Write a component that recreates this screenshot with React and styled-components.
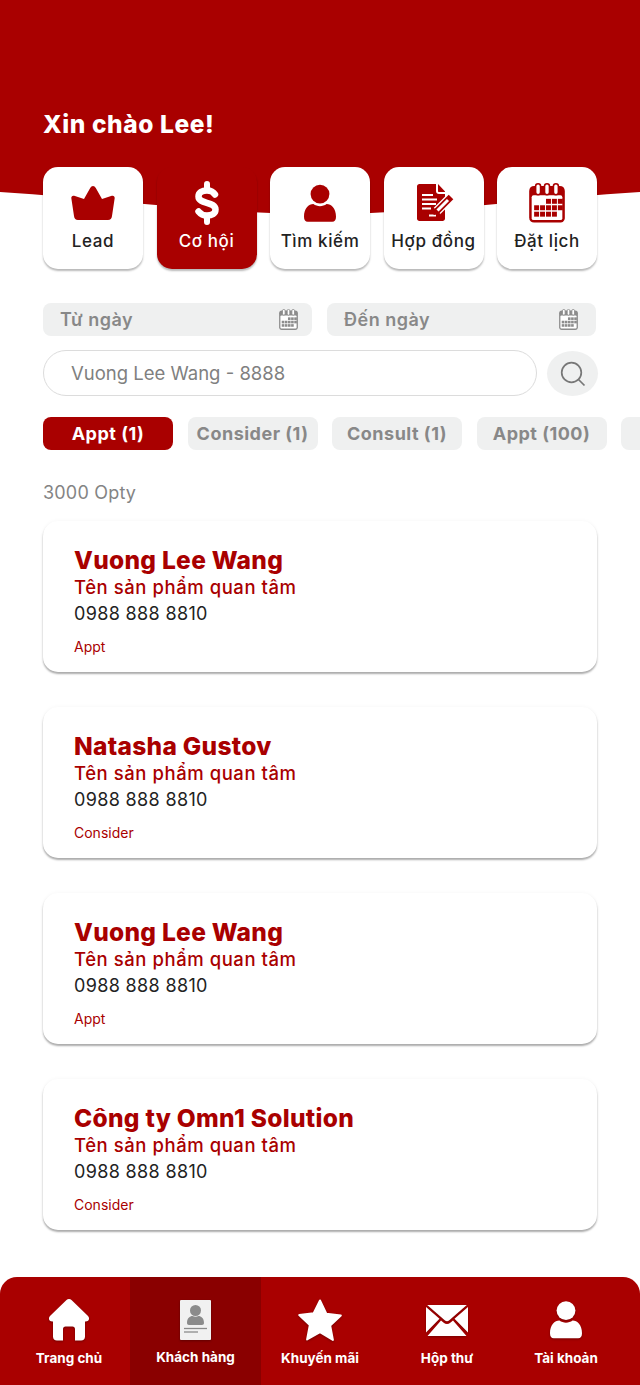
import React from "react";
import styled, { createGlobalStyle } from "styled-components";

const RED = "#a90000";
const FONT = `Inter, "Noto Sans", sans-serif`;

const Global = createGlobalStyle`
  html, body { margin: 0; padding: 0; background: #fff; }
  body { font-family: ${FONT}; }
  * { box-sizing: border-box; }
`;

const Page = styled.div`
  position: relative;
  width: 640px;
  height: 1385px;
  overflow: hidden;
  background: #fff;
  display: flex;
  flex-direction: column;
`;
const HeaderShape = styled.svg`
  position: absolute;
  top: 0;
  left: 0;
  width: 640px;
  height: 220px;
`;
const Main = styled.main`
  position: relative;
  padding: 109px 43px 0;
  flex: 1;
`;
const Greeting = styled.h1`
  margin: 0;
  height: 30px;
  font-size: 24.5px;
  line-height: 30px;
  font-weight: 800;
  letter-spacing: 0.6px;
  color: #fff;
`;
const Tiles = styled.div`
  display: flex;
  justify-content: space-between;
  margin-top: 28px;
  width: 554px;
`;
const Tile = styled.div`
  width: 100px;
  height: 102px;
  border-radius: 15px;
  background: ${(p) => (p.$active ? RED : "#fff")};
  color: ${(p) => (p.$active ? "#fff" : "#222")};
  box-shadow: 0 2px 2px rgba(0, 0, 0, 0.28);
  display: flex;
  flex-direction: column;
  align-items: center;
  padding-top: 12px;
`;
const TileIcon = styled.div`
  height: 48px;
  display: flex;
  align-items: center;
  justify-content: center;
  color: ${(p) => (p.$active ? "#fff" : RED)};
`;
const TileLabel = styled.span`
  margin-top: 2px;
  font-size: 17px;
  line-height: 24px;
  font-weight: 500;
  white-space: nowrap;
  letter-spacing: 0.6px;
`;
const DateRow = styled.div`
  display: flex;
  gap: 15px;
  margin-top: 34px;
`;
const DateField = styled.div`
  width: 269px;
  height: 33px;
  border-radius: 8px;
  background: #eff0f0;
  display: flex;
  align-items: center;
  justify-content: space-between;
  padding: 0 ${(p) => p.$pr}px 0 17px;
  color: #888;
  font-size: 18px;
  font-weight: 600;
  letter-spacing: 0.5px;
`;
const SearchRow = styled.div`
  display: flex;
  gap: 10px;
  margin-top: 14px;
  width: 555px;
`;
const SearchBox = styled.div`
  flex: 1;
  height: 46px;
  border: 1px solid #dcdcdc;
  border-radius: 23px;
  display: flex;
  align-items: center;
  padding-left: 27px;
  font-size: 18.5px;
  color: #808080;
`;
const SearchButton = styled.div`
  width: 51px;
  height: 45px;
  margin-top: 1px;
  border-radius: 50%;
  background: #eff0f0;
  display: flex;
  align-items: center;
  justify-content: center;
  color: #777;
`;
const Tabs = styled.div`
  display: flex;
  gap: 14.5px;
  margin-top: 21px;
  width: 597px;
  overflow: hidden;
`;
const Tab = styled.div`
  flex: 0 0 130px;
  height: 33px;
  border-radius: 8px;
  background: ${(p) => (p.$active ? RED : "#eff0f0")};
  color: ${(p) => (p.$active ? "#fff" : "#888")};
  display: flex;
  align-items: center;
  justify-content: center;
  font-size: 18px;
  font-weight: 700;
  letter-spacing: 0.5px;
  white-space: nowrap;
`;
const Count = styled.div`
  margin-top: 32px;
  font-size: 18px;
  line-height: 22px;
  letter-spacing: 0.2px;
  color: #848484;
`;
const Cards = styled.div`
  display: flex;
  flex-direction: column;
  gap: 35.5px;
  margin-top: 17px;
  width: 554px;
`;
const Card = styled.article`
  height: 150.5px;
  border-radius: 15px;
  background: #fff;
  box-shadow: 0 2px 2px rgba(0, 0, 0, 0.32), 0 0 4px rgba(0, 0, 0, 0.04);
  padding: 24px 31px 0;
`;
const Name = styled.div`
  font-size: 24.5px;
  line-height: 30px;
  font-weight: 800;
  letter-spacing: 0.3px;
  color: ${RED};
`;
const Product = styled.div`
  font-size: 18.5px;
  line-height: 25px;
  font-weight: 500;
  letter-spacing: 0.55px;
  color: ${RED};
`;
const Phone = styled.div`
  font-size: 18px;
  line-height: 26px;
  font-weight: 400;
  color: #222;
  letter-spacing: 0.35px;
  margin-top: 1px;
`;
const Status = styled.div`
  margin-top: 11px;
  font-size: 14px;
  line-height: 18px;
  color: ${RED};
`;
const Nav = styled.nav`
  height: 108px;
  border-radius: 17px 17px 0 0;
  background: ${RED};
  display: flex;
  overflow: hidden;
  padding-right: 23px;
`;
const NavItem = styled.div`
  flex: 0 0 ${(p) => p.$w}px;
  background: ${(p) => (p.$active ? "#8a0000" : "transparent")};
  color: #fff;
  display: flex;
  flex-direction: column;
  align-items: center;
  padding: 18px 0 0 ${(p) => p.$pl || 0}px;
`;
const NavIcon = styled.div`
  height: 50px;
  display: flex;
  align-items: center;
  justify-content: center;
  filter: drop-shadow(0 1px 1px rgba(0, 0, 0, 0.3));
`;
const NavLabel = styled.span`
  margin-top: ${(p) => (p.$active ? "2px" : "3px")};
  font-size: 13.5px;
  line-height: 20px;
  font-weight: 700;
  white-space: nowrap;
`;
const ContractSvg = styled.svg`
  margin-left: 5px;
`;

const Crown = () => (
  <svg width="44" height="35" viewBox="0 0 44 35" fill="currentColor">
    <path d="M22 0c1.200 0 2 .7 2.800 2l6.200 11 9.800-3.200c1.800-.5 3 .6 2.900 2.200L41 30c-.3 2.600-1.600 4-4 4H7c-2.400 0-3.700-1.400-4-4L.3 12c-.1-1.600 1.100-2.700 2.900-2.200L13 13 19.200 2c.8-1.300 1.600-2 2.800-2z" />
  </svg>
);
const Dollar = () => (
  <svg width="24" height="44" viewBox="0 0 24 44" fill="none" stroke="currentColor" strokeLinecap="round">
    <path d="M12 3v6M12 35v6" strokeWidth="6" />
    <path d="M20 13.500c-1.500-2.500-4.500-4-8-4-5 0-8.500 2-8.500 6 0 8 17 4.500 17 13 0 4-3.500 6-8.500 6-3.500 0-6.500-1.500-8.500-4" strokeWidth="6.500" />
  </svg>
);
const Person = ({ w = 32, h = 39 }) => (
  <svg width={w} height={h} viewBox="0 0 34 40" fill="currentColor">
    <circle cx="17" cy="10" r="10" />
    <path d="M0 34c0-9 5-13.500 10-13.500 2 1.500 4.500 2.300 7 2.300s5-.8 7-2.300c5 0 10 4.500 10 13.500 0 3.500-1.500 5.500-4 5.500H4c-2.500 0-4-2-4-5.500z" />
  </svg>
);
const Contract = () => (
  <ContractSvg width="38" height="38" viewBox="0 0 38 38">
    <path fill="currentColor" d="M2.500 0H19v7c0 1.800 1.200 3 3 3h6v24.500c0 1.500-1 2.500-2.500 2.500h-23C1 37 0 36 0 34.500v-32C0 1 1 0 2.500 0z" />
    <path fill="currentColor" d="M21 0l7 7.500v.5h-6c-.6 0-1-.4-1-1z" />
    <path stroke="#fff" strokeWidth="2.200" fill="none" d="M5 11h11M5 15.500h15M5 20h14M5 24.500h9M12 31.500h7" />
    <path stroke="#fff" strokeWidth="9" fill="none" d="M20 27l14-14" />
    <path stroke="currentColor" strokeWidth="6.500" fill="none" d="M20 27l14-14" />
    <path stroke="#fff" strokeWidth="3" fill="none" d="M20 27l11-11" />
    <path fill="currentColor" d="M16.500 31l1.500-7 5.500 5.500z" />
  </ContractSvg>
);
const Calendar = ({ size = 36 }) => (
  <svg width={size} height={size * 1.1} viewBox="0 0 36 40">
    <path fill="currentColor" d="M5 3h26c3 0 5 2 5 5v27c0 3-2 5-5 5H5c-3 0-5-2-5-5V8c0-3 2-5 5-5z" />
    <rect x="2.500" y="12.500" width="31" height="25" rx="2" fill="#fff" />
    {[9, 18, 27].map((x) => (
      <rect key={x} x={x - 2.500} y="0.800" width="5" height="11" rx="2.500" fill="#fff" stroke="currentColor" strokeWidth="1.600" />
    ))}
    {[16, 22.500, 29].flatMap((y, r) =>
      [5.500, 11.500, 17.500, 23.500, 29.500].map((x, c) =>
        (r === 0 && c < 2) || (r === 2 && c === 4) ? null : (
          <rect key={`${r}-${c}`} x={x - 0.500} y={y} width="5" height="5" fill="currentColor" />
        )
      )
    )}
  </svg>
);
const SmallCal = styled.span`
  display: flex;
  color: #8c8c8c;
`;
const Search = () => (
  <svg width="26" height="26" viewBox="0 0 26 26" fill="none" stroke="currentColor" strokeWidth="1.700">
    <circle cx="11.500" cy="11.500" r="9.800" />
    <path d="M18.500 18.500l6 6" />
  </svg>
);
const Home = () => (
  <svg width="42" height="42" viewBox="0 0 42 42" fill="#fff">
    <path d="M21 0c1 0 1.800.4 2.500 1l16.500 16c2.200 2.300.8 5.500-2.500 5.500H37v15c0 2.500-1.500 4-4 4h-6v-11.500c0-1.500-1-2.500-2.500-2.500h-7c-1.500 0-2.500 1-2.500 2.500V41.500H9c-2.500 0-4-1.500-4-4v-15H4.500C1.200 22.500-.2 19.300 2 17L18.500 1c.7-.6 1.500-1 2.500-1z" />
  </svg>
);
const Profile = () => (
  <svg width="31" height="40" viewBox="0 0 31 40">
    <rect width="31" height="40" rx="1" fill="#f1f1f1" />
    <circle cx="15.500" cy="10.500" r="5.500" fill="#8b8b8b" />
    <path d="M7 23c0-5 3-7 5.500-7 1.800 1 4.200 1 6 0 2.500 0 5.500 2 5.500 7 0 1.200-.8 2-2 2H9c-1.200 0-2-.8-2-2z" fill="#8b8b8b" />
    <path d="M4 28.500h23" stroke="#8b8b8b" strokeWidth="1.300" />
    <path d="M4 32h14" stroke="#8b8b8b" strokeWidth="1.300" />
  </svg>
);
const Star = () => (
  <svg width="44" height="42" viewBox="0 0 44 42" fill="#fff" stroke="#fff" strokeLinejoin="round" strokeWidth="2">
    <path d="M22 1.500l6.300 13.200 14.500 1.900-10.600 10 2.700 14.400L22 33.100 9.100 40.500l2.700-14.400L1.200 16.100l14.500-1.900z" />
  </svg>
);
const Mail = () => (
  <svg width="42" height="31" viewBox="0 0 42 31" fill="#fff">
    <path d="M1.200 0h39.600L23 15.500c-1.200 1-2.800 1-4 0z" />
    <path d="M0 2l13.500 11.800L0 27.500zM42 2v25.500L28.500 13.800z" />
    <path d="M1.500 31h39L27 15.500l-2.700 2.300c-2 1.600-4.600 1.600-6.600 0L15 15.500z" />
  </svg>
);

const tiles = [
  { label: "Lead", icon: <Crown /> },
  { label: "Cơ hội", icon: <Dollar />, active: true },
  { label: "Tìm kiếm", icon: <Person /> },
  { label: "Hợp đồng", icon: <Contract /> },
  { label: "Đặt lịch", icon: <Calendar /> },
];
const tabs = ["Appt (1)", "Consider (1)", "Consult (1)", "Appt (100)", ""];
const cards = [
  { name: "Vuong Lee Wang", status: "Appt" },
  { name: "Natasha Gustov", status: "Consider" },
  { name: "Vuong Lee Wang", status: "Appt" },
  { name: "Công ty Omn1 Solution", status: "Consider" },
];
const nav = [
  { label: "Trang chủ", icon: <Home />, w: 130, pl: 8 },
  { label: "Khách hàng", icon: <Profile />, w: 131, active: true },
  { label: "Khuyến mãi", icon: <Star />, w: 118 },
  { label: "Hộp thư", icon: <Mail />, w: 136 },
  { label: "Tài khoản", icon: <Person w={32} h={38} />, w: 102 },
];

export default function App() {
  return (
    <Page>
      <Global />
      <HeaderShape viewBox="0 0 640 220" aria-hidden="true">
        <path d="M0 0H640V192C530 199 420 214 320 214S110 199 0 192Z" fill={RED} />
      </HeaderShape>
      <Main>
        <Greeting>Xin chào Lee!</Greeting>
        <Tiles>
          {tiles.map((t) => (
            <Tile key={t.label} $active={t.active}>
              <TileIcon $active={t.active}>{t.icon}</TileIcon>
              <TileLabel>{t.label}</TileLabel>
            </Tile>
          ))}
        </Tiles>
        <DateRow>
          <DateField $pr={14}>
            Từ ngày
            <SmallCal><Calendar size={19} /></SmallCal>
          </DateField>
          <DateField $pr={18}>
            Đến ngày
            <SmallCal><Calendar size={19} /></SmallCal>
          </DateField>
        </DateRow>
        <SearchRow>
          <SearchBox>Vuong Lee Wang - 8888</SearchBox>
          <SearchButton><Search /></SearchButton>
        </SearchRow>
        <Tabs>
          {tabs.map((t, i) => (
            <Tab key={i} $active={i === 0}>{t}</Tab>
          ))}
        </Tabs>
        <Count>3000 Opty</Count>
        <Cards>
          {cards.map((c, i) => (
            <Card key={i}>
              <Name>{c.name}</Name>
              <Product>Tên sản phẩm quan tâm</Product>
              <Phone>0988 888 8810</Phone>
              <Status>{c.status}</Status>
            </Card>
          ))}
        </Cards>
      </Main>
      <Nav>
        {nav.map((n) => (
          <NavItem key={n.label} $w={n.w} $pl={n.pl} $active={n.active}>
            <NavIcon>{n.icon}</NavIcon>
            <NavLabel $active={n.active}>{n.label}</NavLabel>
          </NavItem>
        ))}
      </Nav>
    </Page>
  );
}
